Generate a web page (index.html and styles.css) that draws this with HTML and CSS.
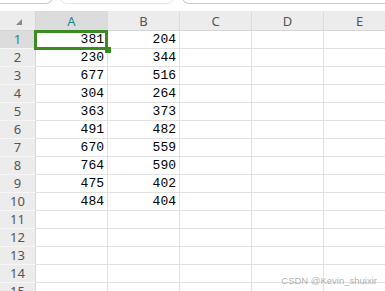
FILE: index.html
```html
<!DOCTYPE html>
<html lang="en">

<head>
    <meta charset="UTF-8">
    <title>Sheet1</title>
    <link rel="stylesheet" href="styles.css">
</head>

<body>
    <div class="toolbar-edge">
        <div class="edge-box edge-left"></div>
        <div class="edge-box edge-mid"></div>
        <div class="edge-box edge-right"></div>
    </div>

    <div class="sheet">
        <div class="corner"><span class="corner-mark"></span></div>
        <div class="col-head active">A</div>
        <div class="col-head">B</div>
        <div class="col-head">C</div>
        <div class="col-head">D</div>
        <div class="col-head">E</div>

        <div class="row-head active">1</div>
        <div class="cell num selected">381<span class="fill-handle"></span></div>
        <div class="cell num">204</div>
        <div class="cell"></div><div class="cell"></div><div class="cell"></div>

        <div class="row-head">2</div>
        <div class="cell num">230</div><div class="cell num">344</div>
        <div class="cell"></div><div class="cell"></div><div class="cell"></div>

        <div class="row-head">3</div>
        <div class="cell num">677</div><div class="cell num">516</div>
        <div class="cell"></div><div class="cell"></div><div class="cell"></div>

        <div class="row-head">4</div>
        <div class="cell num">304</div><div class="cell num">264</div>
        <div class="cell"></div><div class="cell"></div><div class="cell"></div>

        <div class="row-head">5</div>
        <div class="cell num">363</div><div class="cell num">373</div>
        <div class="cell"></div><div class="cell"></div><div class="cell"></div>

        <div class="row-head">6</div>
        <div class="cell num">491</div><div class="cell num">482</div>
        <div class="cell"></div><div class="cell"></div><div class="cell"></div>

        <div class="row-head">7</div>
        <div class="cell num">670</div><div class="cell num">559</div>
        <div class="cell"></div><div class="cell"></div><div class="cell"></div>

        <div class="row-head">8</div>
        <div class="cell num">764</div><div class="cell num">590</div>
        <div class="cell"></div><div class="cell"></div><div class="cell"></div>

        <div class="row-head">9</div>
        <div class="cell num">475</div><div class="cell num">402</div>
        <div class="cell"></div><div class="cell"></div><div class="cell"></div>

        <div class="row-head">10</div>
        <div class="cell num">484</div><div class="cell num">404</div>
        <div class="cell"></div><div class="cell"></div><div class="cell"></div>

        <div class="row-head">11</div>
        <div class="cell"></div><div class="cell"></div><div class="cell"></div><div class="cell"></div><div class="cell"></div>

        <div class="row-head">12</div>
        <div class="cell"></div><div class="cell"></div><div class="cell"></div><div class="cell"></div><div class="cell"></div>

        <div class="row-head">13</div>
        <div class="cell"></div><div class="cell"></div><div class="cell"></div><div class="cell"></div><div class="cell"></div>

        <div class="row-head">14</div>
        <div class="cell"></div><div class="cell"></div><div class="cell"></div><div class="cell"></div><div class="cell"></div>

        <div class="row-head">15</div>
        <div class="cell"></div><div class="cell"></div><div class="cell"></div><div class="cell"></div><div class="cell"></div>
    </div>

    <div class="watermark">CSDN @Kevin_shuixir</div>
</body>

</html>
```

FILE: styles.css
```css
:root {
    --grid-line: #e1e1e1;
    --head-bg: #ececec;
    --head-active: #dcdcdc;
    --head-text: #555;
    --accent-teal: #21888a;
    --select-green: #3a8a22;
}

* {
    margin: 0;
    padding: 0;
    box-sizing: border-box;
}

body {
    background: #fff;
    width: 385px;
    height: 291px;
    overflow: hidden;
    position: relative;
    font-family: "Noto Sans", "Open Sans", Arial, sans-serif;
}

.toolbar-edge {
    height: 11px;
    position: relative;
    overflow: hidden;
}

.edge-box {
    position: absolute;
    top: -10px;
    height: 14px;
    border: 1px solid #c9c9c9;
    border-top: none;
    border-radius: 0 0 7px 7px;
    background: #fff;
}

.edge-left {
    left: -20px;
    width: 73px;
}

.edge-mid {
    left: 60px;
    width: 114px;
    border-color: #e6e6e6;
}

.edge-right {
    left: 182px;
    width: 230px;
}

.sheet {
    display: grid;
    grid-template-columns: 36px repeat(5, 72px);
    grid-template-rows: 20px;
    grid-auto-rows: 18px;
}

.corner,
.col-head,
.row-head {
    background: var(--head-bg);
    color: var(--head-text);
    font-size: 13px;
    display: flex;
    align-items: center;
    justify-content: center;
}

.corner {
    border-right: 1px solid #d6d6d6;
    border-bottom: 1px solid #d6d6d6;
    position: relative;
}

.corner-mark {
    position: absolute;
    left: 16px;
    top: 8px;
    width: 0;
    height: 0;
    border-left: 6px solid transparent;
    border-bottom: 6px solid #8a8a8a;
}

.col-head {
    border-right: 1px solid #dcdcdc;
    border-bottom: 1px solid #d6d6d6;
}

.row-head {
    border-right: 1px solid #d6d6d6;
    border-bottom: 1px solid #f6f6f6;
    padding-bottom: 1px;
}

.col-head.active,
.row-head.active {
    background: var(--head-active);
    color: var(--accent-teal);
}

.cell {
    border-right: 1px solid var(--grid-line);
    border-bottom: 1px solid var(--grid-line);
    font-family: "Liberation Mono", "Courier New", monospace;
    font-size: 13px;
    color: #000;
    line-height: 17px;
}

.num {
    text-align: right;
    padding-right: 3px;
}

.selected {
    position: relative;
}

.selected::after {
    content: '';
    position: absolute;
    top: -1px;
    left: -2px;
    right: -1px;
    bottom: -2px;
    border: 3px solid var(--select-green);
}

.fill-handle {
    position: absolute;
    left: 69px;
    top: 16px;
    width: 6px;
    height: 6px;
    background: var(--select-green);
    z-index: 1;
}

.watermark {
    position: absolute;
    right: 8px;
    bottom: 5px;
    font-family: "Liberation Sans", Arial, sans-serif;
    font-size: 9.5px;
    color: rgba(120, 120, 120, 0.6);
}
```
